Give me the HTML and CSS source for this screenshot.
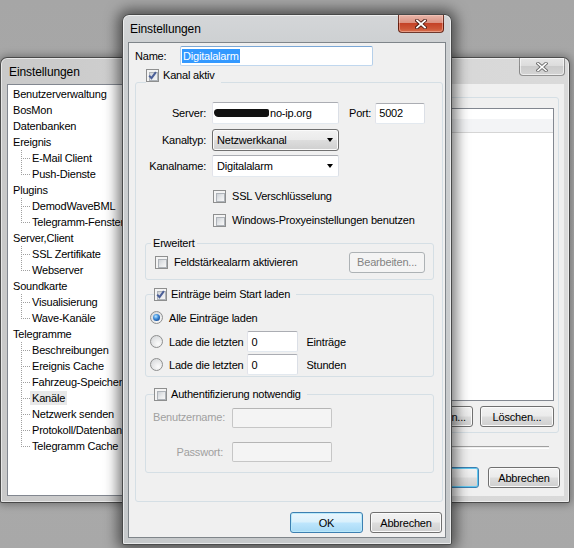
FILE: index.html
```html
<!DOCTYPE html>
<html>
<head>
<meta charset="utf-8">
<link rel="stylesheet" href="styles.css">
</head>
<body>
<div class="desk">

  <div class="win back">
    <div class="titlebar">
      <span class="title">Einstellungen</span>
      <div class="close inactive">
        <svg width="12" height="10" viewBox="0 0 12 10"><path d="M2 1.5 L10 8.5 M10 1.5 L2 8.5" stroke="#6d6d6d" stroke-width="3.4" stroke-linecap="square" fill="none"/><path d="M2 1.5 L10 8.5 M10 1.5 L2 8.5" stroke="#ffffff" stroke-width="1.6" stroke-linecap="square" fill="none"/></svg>
      </div>
    </div>
    <div class="client back-client">
      <div class="tree">
        <div class="node">Benutzerverwaltung</div>
        <div class="node">BosMon</div>
        <div class="node">Datenbanken</div>
        <div class="node">Ereignis</div>
        <div class="kids">
          <div class="kid"><span>E-Mail Client</span></div>
          <div class="kid"><span>Push-Dienste</span></div>
        </div>
        <div class="node">Plugins</div>
        <div class="kids">
          <div class="kid"><span>DemodWaveBML</span></div>
          <div class="kid"><span>Telegramm-Fenster</span></div>
        </div>
        <div class="node">Server,Client</div>
        <div class="kids">
          <div class="kid"><span>SSL Zertifikate</span></div>
          <div class="kid"><span>Webserver</span></div>
        </div>
        <div class="node">Soundkarte</div>
        <div class="kids">
          <div class="kid"><span>Visualisierung</span></div>
          <div class="kid"><span>Wave-Kanäle</span></div>
        </div>
        <div class="node">Telegramme</div>
        <div class="kids">
          <div class="kid"><span>Beschreibungen</span></div>
          <div class="kid"><span>Ereignis Cache</span></div>
          <div class="kid"><span>Fahrzeug-Speicher</span></div>
          <div class="kid"><span class="sel">Kanäle</span></div>
          <div class="kid"><span>Netzwerk senden</span></div>
          <div class="kid"><span>Protokoll/Datenbank</span></div>
          <div class="kid"><span>Telegramm Cache</span></div>
        </div>
      </div>
      <div class="back-right">
        <div class="panel">
          <div class="listbox"><div class="list-head"></div></div>
          <div class="btnrow">
            <button class="btn w74">Bearbeiten...</button>
            <button class="btn w74">Löschen...</button>
          </div>
        </div>
        <div class="sep"></div>
        <div class="btnrow bottom">
          <button class="btn focus w75">OK</button>
          <button class="btn w72">Abbrechen</button>
        </div>
      </div>
    </div>
  </div>

  <div class="win front">
    <div class="titlebar">
      <span class="title">Einstellungen</span>
      <div class="close active">
        <svg width="12" height="10" viewBox="0 0 12 10"><path d="M2 1.5 L10 8.5 M10 1.5 L2 8.5" stroke="#4a1a12" stroke-width="3.6" stroke-linecap="square" fill="none"/><path d="M2 1.5 L10 8.5 M10 1.5 L2 8.5" stroke="#ffffff" stroke-width="1.8" stroke-linecap="square" fill="none"/></svg>
      </div>
    </div>
    <div class="client front-client">
      <div class="name-row">
        <span class="name-lbl">Name:</span>
        <div class="tb name-tb"><span class="hl">Digitalalarm</span></div>
      </div>

      <fieldset class="grp kanal">
        <legend class="lg-tall"><span class="lg-inner"><span class="cb on"><svg width="9" height="9" viewBox="0 0 9 9"><path d="M1.2 4.6 L3.5 7.2 L7.9 1.2" stroke="#4b5f98" stroke-width="2" fill="none"/></svg></span><span class="lg-txt">Kanal aktiv</span></span></legend>
        <div class="kanal-body">
          <div class="frow first">
            <span class="lbl">Server:</span>
            <div class="tb server-tb"><span class="scribble"></span>no-ip.org</div>
            <span class="port-lbl">Port:</span>
            <div class="tb port-tb">5002</div>
          </div>
          <div class="frow r2">
            <span class="lbl">Kanaltyp:</span>
            <div class="combo btnlike">Netzwerkkanal<span class="arrow"></span></div>
          </div>
          <div class="frow r3">
            <span class="lbl">Kanalname:</span>
            <div class="combo white">Digitalalarm<span class="arrow"></span></div>
          </div>
          <div class="crow ssl"><span class="cb"></span><span class="ctxt">SSL Verschlüsselung</span></div>
          <div class="crow proxy"><span class="cb"></span><span class="ctxt">Windows-Proxyeinstellungen benutzen</span></div>

          <fieldset class="grp sub erw">
            <legend class="lg-text">Erweitert</legend>
            <div class="erw-body">
              <span class="cb"></span><span class="ctxt">Feldstärkealarm aktivieren</span>
              <button class="btn disabled bearb">Bearbeiten...</button>
            </div>
          </fieldset>

          <fieldset class="grp sub ein">
            <legend class="lg-cb"><span class="lg-inner"><span class="cb on"><svg width="9" height="9" viewBox="0 0 9 9"><path d="M1.2 4.6 L3.5 7.2 L7.9 1.2" stroke="#4b5f98" stroke-width="2" fill="none"/></svg></span><span class="lg-txt">Einträge beim Start laden</span></span></legend>
            <div class="ein-body">
              <div class="rrow r-first"><span class="rb on"></span><span class="rtxt">Alle Einträge laden</span></div>
              <div class="rrow r-tb"><span class="rb"></span><span class="rtxt">Lade die letzten</span><div class="tb num-tb">0</div><span class="unit">Einträge</span></div>
              <div class="rrow r-tb r-last"><span class="rb"></span><span class="rtxt">Lade die letzten</span><div class="tb num-tb">0</div><span class="unit">Stunden</span></div>
            </div>
          </fieldset>

          <fieldset class="grp sub auth">
            <legend class="lg-cb"><span class="lg-inner"><span class="cb"></span><span class="lg-txt">Authentifizierung notwendig</span></span></legend>
            <div class="auth-body">
              <div class="arow"><span class="albl a1l">Benutzername:</span><div class="tb dis"></div></div>
              <div class="arow a2"><span class="albl">Passwort:</span><div class="tb dis"></div></div>
            </div>
          </fieldset>
        </div>
      </fieldset>

      <div class="dlg-buttons">
        <button class="btn focus ok">OK</button>
        <button class="btn cancel">Abbrechen</button>
      </div>
    </div>
  </div>

</div>
</body>
</html>
```

FILE: styles.css
```css
html, body {
  margin: 0;
  padding: 0;
}
body {
  width: 574px;
  height: 548px;
  overflow: hidden;
  background: #a9a9a9;
  font-family: "Liberation Sans", Arial, sans-serif;
  font-size: 11px;
  letter-spacing: -0.2px;
  color: #000;
}
.desk {
  position: relative;
  width: 574px;
  height: 548px;
  background: linear-gradient(180deg, #a6a6a6 0%, #ababab 60%, #a8a8a8 100%);
  overflow: hidden;
}

/* ---------- windows ---------- */
.win {
  position: absolute;
  box-sizing: border-box;
  border: 1px solid rgba(30, 30, 30, 0.75);
  border-radius: 7px 7px 2px 2px;
  display: flex;
  flex-direction: column;
}
.back {
  left: 0;
  top: 57px;
  width: 570px;
  height: 446px;
  padding: 0 5px 6px 6px;
  background: linear-gradient(90deg, #c9c9c9 0%, #d3d3d3 40%, #dadada 100%);
  box-shadow: 0 0 8px 1px rgba(0, 0, 0, 0.35), inset 0 0 0 1px rgba(255, 255, 255, 0.55);
}
.front {
  left: 122px;
  top: 14px;
  width: 330px;
  height: 531px;
  padding: 0 5px 6px 5px;
  background: linear-gradient(180deg, #d4d6d8 0%, #cdd0d2 30px, #c6c9cb 100%);
  box-shadow: 0 0 14px 4px rgba(0, 0, 0, 0.55), inset 0 0 0 1px rgba(255, 255, 255, 0.6);
}
.titlebar {
  display: flex;
  justify-content: space-between;
  align-items: flex-start;
  flex: none;
}
.back .titlebar { height: 26px; }
.front .titlebar { height: 27px; }
.title {
  font-family: "Liberation Sans", Arial, sans-serif;
  font-size: 12px;
  letter-spacing: -0.1px;
  color: #000;
  line-height: 14px;
}
.back .title { padding: 7px 0 0 2px; }
.front .title { padding: 7px 0 0 2px; }
.close {
  width: 46px;
  height: 18px;
  box-sizing: border-box;
  border-radius: 0 0 4px 4px;
  display: flex;
  align-items: center;
  justify-content: center;
}
.close.active {
  margin-right: 2px;
  border: 1px solid rgba(70, 15, 5, 0.75);
  border-top: none;
  background: linear-gradient(180deg, #e8b6aa 0%, #dc9282 45%, #c44227 50%, #cd5637 80%, #d8704e 100%);
  box-shadow: inset 0 0 0 1px rgba(255, 210, 200, 0.45);
}
.close.inactive {
  margin-right: -1px;
  border: 1px solid rgba(90, 90, 90, 0.6);
  border-top: none;
  background: linear-gradient(180deg, #e6e6e6 0%, #dcdcdc 45%, #cbcbcb 50%, #d4d4d4 100%);
  box-shadow: inset 0 0 0 1px rgba(255, 255, 255, 0.6);
}
.client {
  flex: 1;
  background: #f0f0f0;
  box-sizing: border-box;
  min-height: 0;
}
.front-client {
  border: 1px solid #7f858a;
  display: flex;
  flex-direction: column;
}

/* ---------- back window ---------- */
.back-client {
  display: flex;
  overflow: hidden;
}
.tree {
  width: 200px;
  flex: none;
  box-sizing: border-box;
  background: #fff;
  border: 1px solid #828790;
  padding-top: 1px;
  line-height: 16px;
  white-space: nowrap;
  overflow: hidden;
}
.node {
  height: 16px;
  padding-left: 5px;
}
.kid {
  position: relative;
  height: 16px;
  padding-left: 22px;
}
.kid span {
  display: inline-block;
  padding: 0 2px;
  line-height: 14px;
  margin-top: 1px;
  vertical-align: top;
}
.kid span.sel {
  background: #e8e8e8;
}
.kid::before {
  content: "";
  position: absolute;
  left: 13px;
  top: 8px;
  width: 9px;
  height: 1px;
  background: repeating-linear-gradient(90deg, #a0a0a0 0 1px, transparent 1px 2px);
}
.kid::after {
  content: "";
  position: absolute;
  left: 13px;
  top: 0;
  width: 1px;
  height: 16px;
  background: repeating-linear-gradient(180deg, #a0a0a0 0 1px, transparent 1px 2px);
}
.kid:last-child::after {
  height: 9px;
}
.back-right {
  flex: 1;
  display: flex;
  flex-direction: column;
  padding: 13px 5px 0 10px;
  min-width: 0;
}
.panel {
  height: 336px;
  box-sizing: border-box;
  border: 1px solid #d5dfe5;
  border-radius: 3px;
  padding: 10px 4px 0 4px;
  display: flex;
  flex-direction: column;
}
.listbox {
  height: 293px;
  box-sizing: border-box;
  border: 1px solid #828790;
  background: #fff;
  padding-top: 0;
}
.list-head {
  height: 24px;
  box-sizing: border-box;
  background: linear-gradient(180deg, #ffffff 0%, #ffffff 42%, #f3f4f6 42%, #f3f4f6 100%);
  border-bottom: 1px solid #d5d5d5;
}
.btnrow {
  display: flex;
  justify-content: flex-end;
  gap: 7px;
  margin-top: 5px;
}
.sep {
  margin: 13px 10px 0 0;
  height: 1px;
  border-top: 1px solid #a0a0a0;
  border-bottom: 1px solid #ffffff;
}
.btnrow.bottom {
  margin-top: 18px;
  gap: 9px;
  margin-right: -1px;
}
.w74 { width: 74px; }
.w75 { width: 75px; }
.w72 { width: 72px; }

/* ---------- controls ---------- */
.btn {
  height: 21px;
  box-sizing: border-box;
  padding: 0;
  font-family: "Liberation Sans", Arial, sans-serif;
  font-size: 11px;
  letter-spacing: -0.2px;
  color: #000;
  border: 1px solid #707070;
  border-radius: 3px;
  background: linear-gradient(180deg, #f2f2f2 0%, #ebebeb 48%, #dddddd 52%, #cfcfcf 100%);
  box-shadow: inset 0 0 0 1px #fbfbfb;
}
.btn.focus {
  border-color: #3c7fb1;
  background: linear-gradient(180deg, #eaf6fd 0%, #d9f0fc 48%, #bee6fd 52%, #a7d9f5 100%);
  box-shadow: inset 0 0 0 1px #b9e9fa;
}
.back .btn.focus {
  background: linear-gradient(180deg, #f2f2f2 0%, #ebebeb 48%, #dddddd 52%, #cfcfcf 100%);
  box-shadow: inset 0 0 0 1px #62c8ef;
}
.btn.disabled {
  border-color: #adb2b5;
  background: #f4f4f4;
  color: #838383;
  box-shadow: none;
}
.tb {
  box-sizing: border-box;
  background: #fff;
  border: 1px solid;
  border-color: #abadb3 #dbdfe6 #e3e9ef #e2e3ea;
  border-radius: 2px;
  display: flex;
  align-items: center;
  padding-left: 3px;
  white-space: nowrap;
  overflow: hidden;
}
.tb.dis {
  background: #f4f4f4;
  border-color: #b5b5b5 #c6c6c6 #c6c6c6 #c6c6c6;
}
.cb {
  position: relative;
  flex: none;
  width: 13px;
  height: 13px;
  box-sizing: border-box;
  border: 1px solid #8e8f8f;
  background: #f4f4f4;
  display: inline-flex;
  align-items: center;
  justify-content: center;
}
.cb::before {
  content: "";
  position: absolute;
  left: 2px;
  top: 2px;
  width: 7px;
  height: 7px;
  border: 1px solid #aeb3b9;
  background: linear-gradient(135deg, #cdd1d6 0%, #e6e8ea 50%, #f7f7f7 100%);
}
.cb svg {
  position: relative;
  z-index: 1;
}
.rb {
  position: relative;
  flex: none;
  width: 13px;
  height: 13px;
  box-sizing: border-box;
  border-radius: 50%;
  border: 1px solid #8e8f8f;
  background: radial-gradient(circle at 65% 70%, #fbfbfb 0%, #e6e7e8 50%, #cfd2d5 100%);
}
.rb.on::after {
  content: "";
  position: absolute;
  left: 2px;
  top: 2px;
  width: 7px;
  height: 7px;
  border-radius: 50%;
  background: radial-gradient(circle at 40% 35%, #bfe6ff 0%, #3f8fdc 40%, #123f87 85%, #0c2c66 100%);
}

/* ---------- front dialog content ---------- */
.name-row {
  display: flex;
  align-items: center;
  padding: 3px 0 0 6px;
  height: 20px;
  flex: none;
}
.name-lbl {
  width: 45px;
}
.name-tb {
  width: 193px;
  height: 20px;
  padding-left: 1px;
  border-color: #7aa7d6 #b5cfe9 #c0d7ee #b5cfe9;
}
.hl {
  background: #3399ff;
  color: #fff;
  line-height: 14px;
  padding: 0 1px;
}
.grp {
  margin: 0;
  padding: 0;
  border: 1px solid #d5dfe5;
  border-radius: 3px;
  min-width: 0;
}
.kanal {
  margin: 3px 2px 0 6px;
  flex: none;
}
.lg-tall {
  padding: 0;
  margin-left: 10px;
  height: 26px;
  box-sizing: border-box;
}
.lg-inner {
  display: flex;
  align-items: center;
  height: 13px;
  padding-right: 6px;
}
.lg-txt {
  margin-left: 4px;
  line-height: 13px;
}
.lg-cb {
  padding: 0;
  margin-left: 8px;
  height: 13px;
}
.lg-text {
  padding: 0 2px;
  margin-left: 5px;
  line-height: 13px;
  height: 13px;
}
.kanal-body {
  padding: 0 8px 28px 9px;
}
.frow {
  display: flex;
  align-items: center;
  height: 22px;
}
.frow.first { margin-top: 7px; }
.frow.r2 { margin-top: 5px; }
.frow.r3 { margin-top: 4px; }
.lbl {
  width: 61px;
  text-align: right;
  margin-right: 6px;
  flex: none;
}
.server-tb {
  width: 127px;
  height: 22px;
  padding-left: 1px;
}
.scribble {
  display: inline-block;
  width: 55px;
  height: 8px;
  margin-right: 1px;
  background: #111;
  border-radius: 4px 2px 3px 5px;
  filter: blur(0.5px);
}
.port-lbl {
  margin-left: 10px;
}
.port-tb {
  width: 50px;
  height: 21px;
  margin-left: 4px;
}
.combo {
  position: relative;
  width: 127px;
  height: 22px;
  box-sizing: border-box;
  display: flex;
  align-items: center;
  padding-left: 4px;
}
.combo.btnlike {
  border: 1px solid #707070;
  border-radius: 3px;
  background: linear-gradient(180deg, #f2f2f2 0%, #ebebeb 48%, #dddddd 52%, #cfcfcf 100%);
  box-shadow: inset 0 0 0 1px #fbfbfb;
}
.combo.white {
  background: #fff;
  border: 1px solid;
  border-color: #abadb3 #dbdfe6 #e3e9ef #e2e3ea;
  border-radius: 2px;
}
.arrow {
  margin-left: auto;
  margin-right: 5px;
  width: 0;
  height: 0;
  border-left: 3.5px solid transparent;
  border-right: 3.5px solid transparent;
  border-top: 4px solid #000;
}
.crow {
  display: flex;
  align-items: center;
  height: 13px;
  padding-left: 68px;
}
.crow.ssl { margin-top: 13px; }
.crow.proxy { margin-top: 11px; }
.ctxt {
  margin-left: 6px;
  line-height: 13px;
}
.sub {
  margin-right: 0;
}
.erw {
  margin-top: 10px;
}
.erw-body {
  display: flex;
  align-items: center;
  height: 22px;
  padding: 1px 8px 6px 9px;
}
.bearb {
  margin-left: auto;
  width: 76px;
  height: 21px;
}
.ein {
  margin-top: 8px;
}
.ein-body {
  padding: 0 0 1px 4px;
}
.rrow {
  display: flex;
  align-items: center;
  white-space: nowrap;
}
.r-first {
  height: 13px;
  margin-top: 10px;
}
.r-tb {
  height: 21px;
  margin-top: 7px;
}
.r-last {
  margin-top: 2px;
}
.rtxt {
  margin-left: 6px;
}
.num-tb {
  width: 51px;
  height: 21px;
  margin-left: 4px;
}
.unit {
  margin-left: 8px;
}
.auth {
  margin-top: 11px;
}
.auth-body {
  padding: 7px 0 10px 7px;
}
.arow {
  display: flex;
  align-items: center;
  height: 20px;
}
.arow.a2 {
  margin-top: 14px;
}
.albl {
  width: 70px;
  text-align: right;
  color: #a0a0a0;
  margin-right: 9px;
}
.albl.a1l {
  margin-top: -3px;
}
.arow .tb.dis {
  width: 100px;
  height: 20px;
}
.dlg-buttons {
  display: flex;
  justify-content: flex-end;
  gap: 7px;
  margin: 10px 3px 0 0;
}
.ok {
  width: 73px;
}
.cancel {
  width: 72px;
}
```
